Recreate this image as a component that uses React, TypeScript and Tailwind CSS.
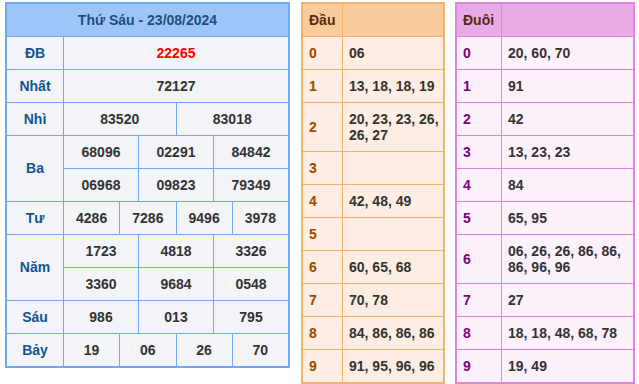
import React from 'react';

const font = { fontFamily: '"Liberation Sans", Arial, sans-serif' };

// hàng giải: label + nhiều dòng số
const prizes: { label: string; rows: string[][]; red?: boolean }[] = [
  { label: 'ĐB', rows: [['22265']], red: true },
  { label: 'Nhất', rows: [['72127']] },
  { label: 'Nhì', rows: [['83520', '83018']] },
  { label: 'Ba', rows: [['68096', '02291', '84842'], ['06968', '09823', '79349']] },
  { label: 'Tư', rows: [['4286', '7286', '9496', '3978']] },
  { label: 'Năm', rows: [['1723', '4818', '3326'], ['3360', '9684', '0548']] },
  { label: 'Sáu', rows: [['986', '013', '795']] },
  { label: 'Bảy', rows: [['19', '06', '26', '70']] },
];

const dau = [
  '06',
  '13, 18, 18, 19',
  '20, 23, 23, 26, 26, 27',
  '',
  '42, 48, 49',
  '',
  '60, 65, 68',
  '70, 78',
  '84, 86, 86, 86',
  '91, 95, 96, 96',
];

const duoi = [
  '20, 60, 70',
  '91',
  '42',
  '13, 23, 23',
  '84',
  '65, 95',
  '06, 26, 26, 86, 86, 86, 96, 96',
  '27',
  '18, 18, 48, 68, 78',
  '19, 49',
];

function ResultTable() {
  return (
    <div className="w-[285px] border-2 border-[#6fa8f5] bg-[#f3f4f8]">
      <div className="h-[32px] bg-[#9fc5f8] flex items-center justify-center font-bold text-[14px] text-[#1f4e79]">
        Thứ Sáu - 23/08/2024
      </div>
      {prizes.map((p) => (
        <div key={p.label} className="flex border-t border-[#6fa8f5]">
          <div className="w-[57px] shrink-0 border-r border-[#6fa8f5] flex items-center justify-center font-bold text-[14px] text-[#12548f]">
            {p.label}
          </div>
          <div className="flex-1 flex flex-col">
            {p.rows.map((r, i) => (
              <div key={i} className={`flex ${i > 0 ? 'h-[33px] border-t border-[#6fa8f5]' : 'h-[32px]'}`}>
                {r.map((n, j) => (
                  <div
                    key={j}
                    className={`flex-1 flex items-center justify-center font-bold text-[14px] ${p.red ? 'text-[#ff0000]' : 'text-[#333333]'} ${j > 0 ? 'border-l border-[#6fa8f5]' : ''}`}
                  >
                    {n}
                  </div>
                ))}
              </div>
            ))}
          </div>
        </div>
      ))}
    </div>
  );
}

function LotoTable({
  title,
  data,
  width,
  keyWidth,
  border,
  head,
  body,
  digit,
}: {
  title: string;
  data: string[];
  width: string;
  keyWidth: string;
  border: string;
  head: string;
  body: string;
  digit: string;
}) {
  return (
    <div className={`${width} border-2 ${border} ${body}`}>
      <div className={`flex h-[32px] ${head}`}>
        <div className={`${keyWidth} shrink-0 border-r ${border} flex items-center pl-[6px] font-bold text-[14px] text-[#5a2a0c]`}>
          {title}
        </div>
        <div className="flex-1" />
      </div>
      {data.map((v, i) => (
        <div key={i} className={`flex min-h-[33px] border-t ${border}`}>
          <div className={`${keyWidth} shrink-0 border-r ${border} flex items-center pl-[6px] font-bold text-[14px] ${digit}`}>
            {i}
          </div>
          <div className="flex-1 flex items-center pl-[6px] pr-[3px] py-[8px] font-bold text-[14px] leading-[16px] text-[#333333]">
            {v}
          </div>
        </div>
      ))}
    </div>
  );
}

export default function App() {
  return (
    <div style={font} className="w-[639px] h-[384px] bg-white flex items-start pl-[5px] pt-[2px]">
      <ResultTable />
      <div className="ml-[11px]">
        <LotoTable
          title="Đầu"
          data={dau}
          width="w-[144px]"
          keyWidth="w-[40px]"
          border="border-[#f6b26b]"
          head="bg-[#f9cb9c]"
          body="bg-[#fdede2]"
          digit="text-[#994c00]"
        />
      </div>
      <div className="ml-[10px]">
        <LotoTable
          title="Đuôi"
          data={duoi}
          width="w-[180px]"
          keyWidth="w-[45px]"
          border="border-[#e283df]"
          head="bg-[#e6aae6]"
          body="bg-[#fcf0fb]"
          digit="text-[#800080]"
        />
      </div>
    </div>
  );
}
